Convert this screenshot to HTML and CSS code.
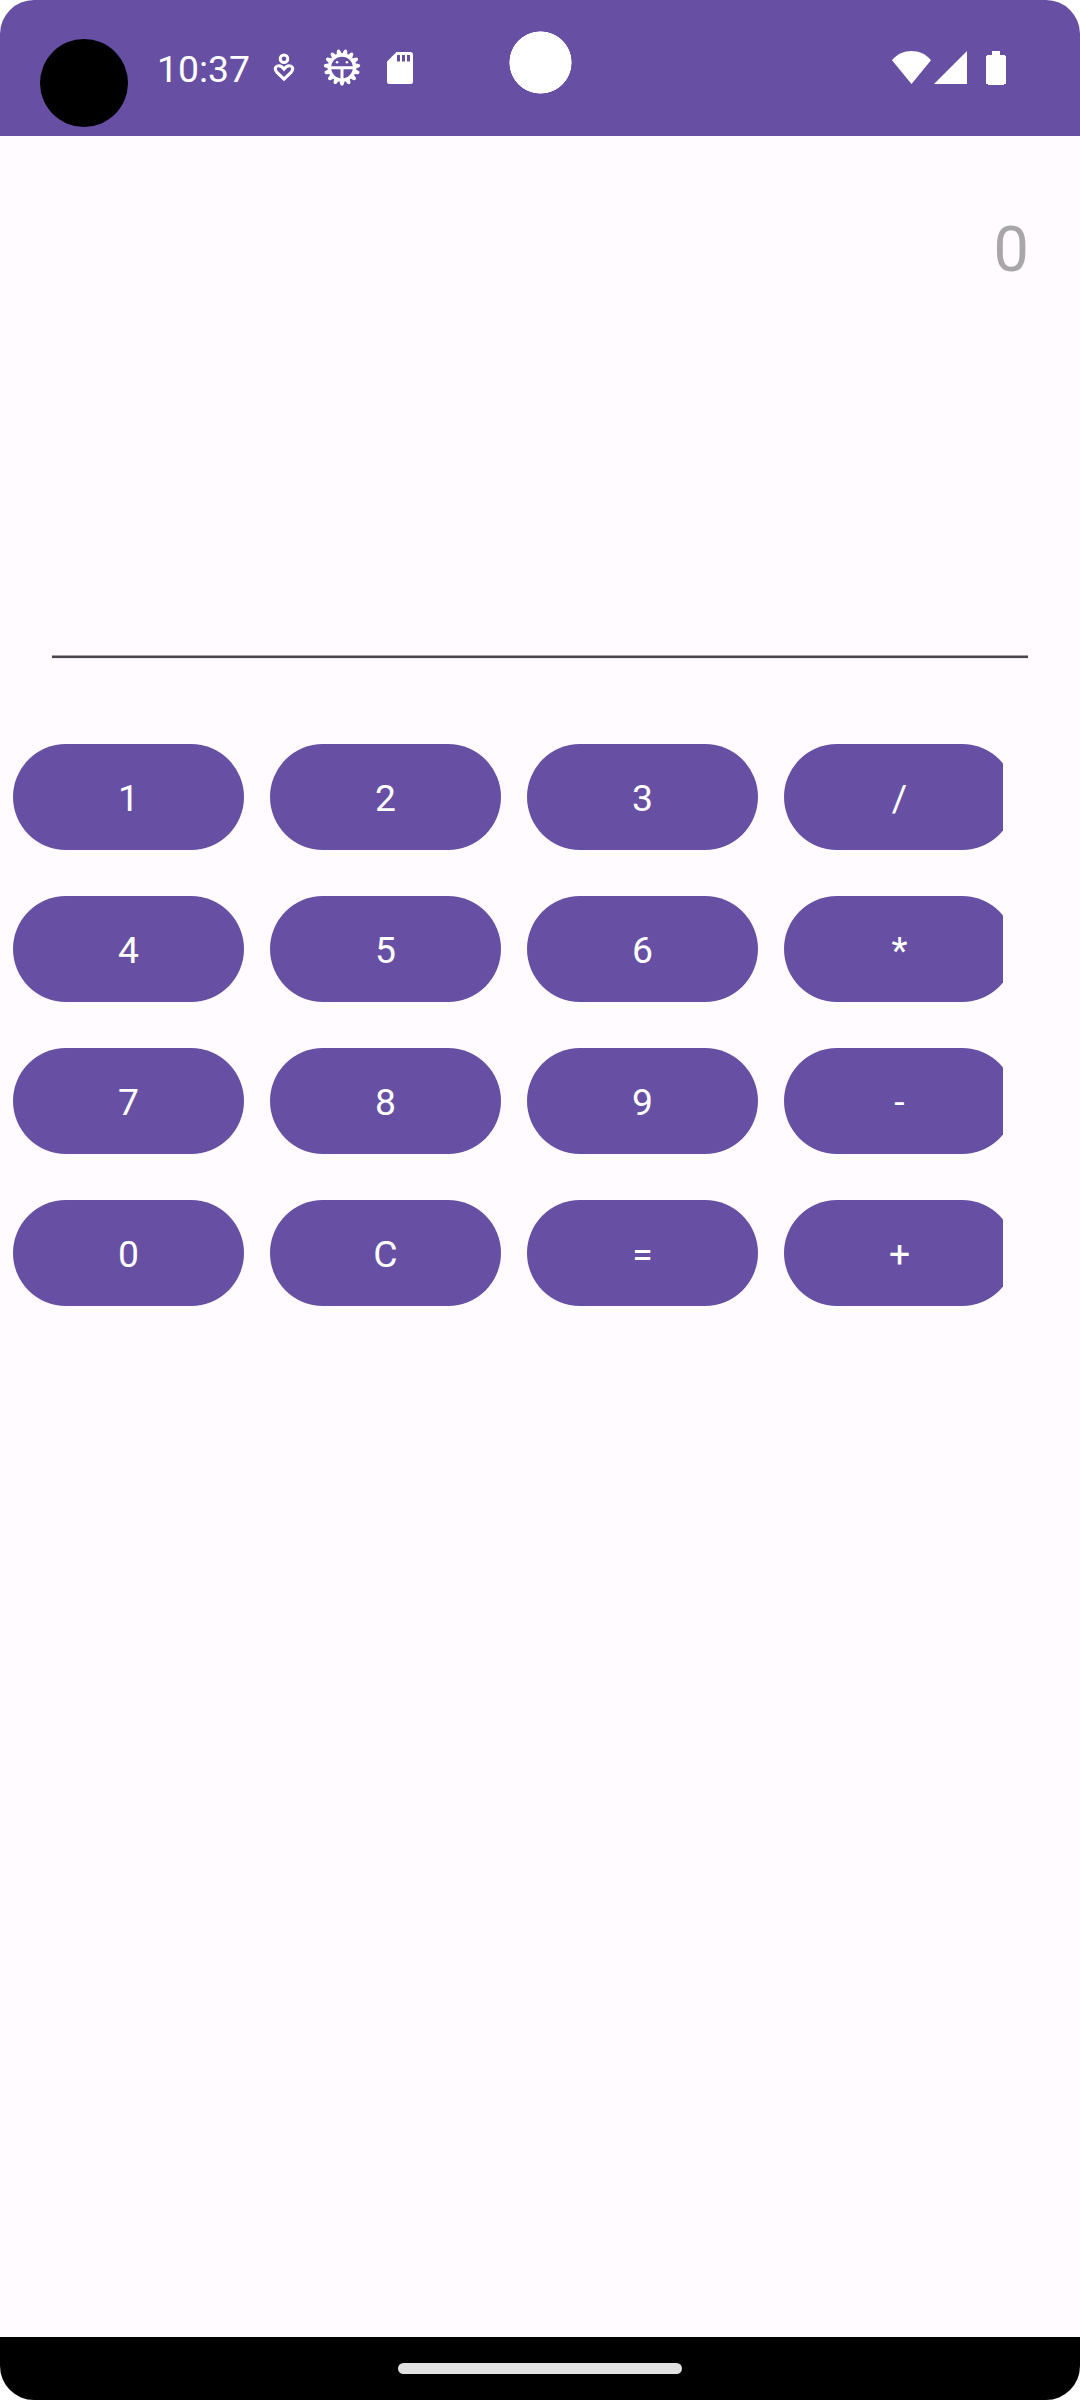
FILE: index.html
```html
<!DOCTYPE html>
<html lang="en">
<head>
<meta charset="utf-8">
<title>Calculator</title>
<link rel="stylesheet" href="styles.css">
</head>
<body>
<div class="screen">
  <header class="status">
    <span class="cutout cutout-black"></span>
    <span class="cutout cutout-white"></span>
    <div class="status-left">
      <span class="time">10:37</span>
      <svg class="icon-heart" width="22" height="30" viewBox="0 0 22 30" fill="none" stroke="#fff" stroke-width="3"><circle cx="11" cy="5.700" r="3.800"/><path d="M11 26.200 4 19.400C.4 15.200 3.200 12.700 5.800 12.700c2.500 0 3.700 1.300 5.200 3.300 1.500-2 2.700-3.300 5.200-3.300 2.600 0 5.400 2.500 1.800 6.700z"/></svg>
      <svg class="icon-gear" width="38" height="38" viewBox="-19 -19.500 38 38" fill="#fff">
        <defs><path id="tooth" d="M-2.900 12.500-1.600 17.200Q0 19.400 1.600 17.200L2.900 12.500z"/></defs>
        <use href="#tooth"/><use href="#tooth" transform="rotate(24)"/><use href="#tooth" transform="rotate(48)"/><use href="#tooth" transform="rotate(72)"/><use href="#tooth" transform="rotate(96)"/><use href="#tooth" transform="rotate(120)"/><use href="#tooth" transform="rotate(144)"/><use href="#tooth" transform="rotate(168)"/><use href="#tooth" transform="rotate(192)"/><use href="#tooth" transform="rotate(216)"/><use href="#tooth" transform="rotate(240)"/><use href="#tooth" transform="rotate(264)"/><use href="#tooth" transform="rotate(288)"/><use href="#tooth" transform="rotate(312)"/><use href="#tooth" transform="rotate(336)"/>
        <circle r="12.500" fill="none" stroke="#fff" stroke-width="3.400"/>
        <path d="M-12-1.200H12V1.800H1.500V13H-1.500V1.800H-12z"/>
        <circle cx="-4.900" cy="-5.300" r="1.300"/><circle cx="4.900" cy="-5.300" r="1.300"/>
      </svg>
      <svg class="icon-card" width="26" height="32" viewBox="0 0 26 32"><path fill="#fff" fill-rule="evenodd" d="M9.500 0H23.500Q26 0 26 2.500V29.500Q26 32 23.500 32H2.500Q0 32 0 29.500V9.500zM10 3V9.500H13V3zM15 3V9.500H18V3zM20 3V9.500H23V3z"/></svg>
    </div>
    <div class="status-right">
      <svg width="39" height="33" viewBox="0 0 39 33" fill="#fff"><path d="M19.500 33 0 9.200C10-3 29-3 39 9.200z"/></svg>
      <svg class="icon-signal" width="33" height="33" viewBox="0 0 33 33" fill="#fff"><path d="M0 33 33 0V33z"/></svg>
      <svg class="icon-battery" width="20" height="34" viewBox="0 0 20 34" fill="#fff"><path d="M6 0h8v4h5v1h1v28h-2v1H2v-1H0V5h1V4h5z"/></svg>
    </div>
  </header>
  <main class="app">
    <div class="display"><span>0</span></div>
    <div class="underline"></div>
    <div class="keypad">
      <button class="key">1</button><button class="key">2</button><button class="key">3</button><button class="key">/</button>
      <button class="key">4</button><button class="key">5</button><button class="key">6</button><button class="key">*</button>
      <button class="key">7</button><button class="key">8</button><button class="key">9</button><button class="key">-</button>
      <button class="key">0</button><button class="key">C</button><button class="key">=</button><button class="key">+</button>
    </div>
  </main>
  <footer class="nav"><span class="handle"></span></footer>
</div>
</body>
</html>
```
FILE: styles.css
```css
* { box-sizing: border-box; }
body { margin: 0; background: #fff; font-family: Roboto, sans-serif; }
.screen {
  width: 1080px; height: 2400px;
  display: flex; flex-direction: column;
  border-radius: 34px; overflow: hidden;
  background: #fffbff;
}
.status {
  position: relative;
  height: 136px; flex: none;
  display: flex; justify-content: space-between;
  padding: 0 74px 0 157px;
  background: #6750a4; color: #fff;
}
.cutout { position: absolute; border-radius: 50%; }
.cutout-black { left: 40px; top: 39px; width: 88px; height: 88px; background: #000; }
.cutout-white {
  left: 509px; top: 31px; width: 63px; height: 63px;
  background: radial-gradient(circle at center, #fff 30.8px, transparent 31.4px);
}
.status-left, .status-right { display: flex; align-items: flex-start; }
.status svg { display: block; }
.time { width: 116px; padding-top: 47px; font-size: 37.3px; line-height: 45px; }
.icon-heart { margin-top: 53px; }
.icon-gear { margin: 48px 0 0 28px; }
.icon-card { margin: 52px 0 0 26px; }
.status-right { padding-top: 51px; }
.icon-signal { margin-left: 3px; }
.icon-battery { margin-left: 19px; }
.app { flex: 1; }
.display {
  height: 519px; margin: 0 51px 0 52px; padding-top: 77px;
  text-align: right; font-size: 63px; line-height: 74px; color: #a8a6a9;
}
.underline {
  height: 4px; margin: 0 52px;
  background: linear-gradient(#a4a1a7 1px, #49454f 1px 3px, #edeaef 3px);
}
.keypad {
  width: 1003px; margin-top: 85px; padding-left: 13px;
  display: grid; grid-template-columns: repeat(4, 231px); grid-auto-rows: 106px;
  gap: 46px 26px; overflow: hidden;
}
.key {
  padding: 1px 0 0; border: 0; border-radius: 53px;
  background: #6750a4; color: #fff;
  font: 400 37.3px/44px Roboto, sans-serif;
}
.nav {
  height: 63px; flex: none;
  display: flex; justify-content: center; padding-top: 26px;
  background: #000;
}
.handle { width: 284px; height: 11px; border-radius: 5.5px; background: #e2e2e2; }
```
